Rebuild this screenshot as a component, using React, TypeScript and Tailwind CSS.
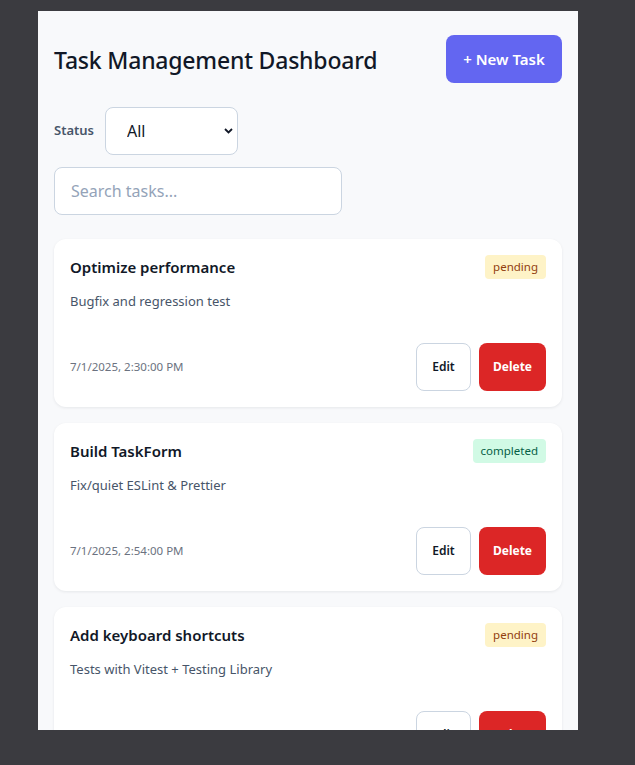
import { useState } from "react";

type Task = {
  id: number;
  title: string;
  description: string;
  status: "pending" | "completed";
  createdAt: string;
};

const tasks: Task[] = [
  {
    id: 1,
    title: "Optimize performance",
    description: "Bugfix and regression test",
    status: "pending",
    createdAt: "7/1/2025, 2:30:00 PM",
  },
  {
    id: 2,
    title: "Build TaskForm",
    description: "Fix/quiet ESLint & Prettier",
    status: "completed",
    createdAt: "7/1/2025, 2:54:00 PM",
  },
  {
    id: 3,
    title: "Add keyboard shortcuts",
    description: "Tests with Vitest + Testing Library",
    status: "pending",
    createdAt: "7/1/2025, 3:12:00 PM",
  },
];

function StatusBadge({ status }: { status: Task["status"] }) {
  const styles =
    status === "completed"
      ? "bg-[#d1fae5] text-[#065f46]"
      : "bg-[#fef3c7] text-[#92400e]";
  return (
    <span className={`${styles} rounded px-[8px] h-6 flex items-center text-[11.5px]`}>
      {status}
    </span>
  );
}

function TaskCard({ task }: { task: Task }) {
  return (
    <div className="bg-white rounded-xl shadow-[0_1px_3px_rgba(15,23,42,0.08)] p-4 shrink-0">
      <div className="flex items-center justify-between h-6">
        <h3 className="text-[15px] font-semibold text-[#111827]">{task.title}</h3>
        <StatusBadge status={task.status} />
      </div>
      <p className="mt-[12px] text-[13px] leading-5 text-[#475569]">{task.description}</p>
      <div className="mt-8 flex items-center justify-between">
        <span className="text-[11.5px] text-[#6b7280]">{task.createdAt}</span>
        <div className="flex gap-2">
          <button className="h-12 w-[55px] rounded-lg border border-[#cbd5e1] bg-white text-xs font-semibold text-[#111827]">
            Edit
          </button>
          <button className="h-12 w-[67px] rounded-lg bg-[#dc2626] text-xs font-bold text-white">
            Delete
          </button>
        </div>
      </div>
    </div>
  );
}

export default function App() {
  const [status, setStatus] = useState("all");
  const [query, setQuery] = useState("");

  return (
    <div
      className="min-h-[765px] bg-[#3b3b40] pt-[11px] pl-[38px]"
      style={{ fontFamily: '"Segoe UI", "Noto Sans", "Open Sans", sans-serif' }}
    >
      <div className="w-[540px] h-[719px] overflow-hidden bg-[#f8f9fb] px-4 pt-6">
        <header className="flex items-center justify-between h-12">
          <h1 className="text-[23px] font-medium text-[#111827] tracking-[-0.2px] pt-[2px]">
            Task Management Dashboard
          </h1>
          <button className="h-12 w-[116px] rounded-lg bg-[#6366f1] text-[15px] font-semibold text-white">
            + New Task
          </button>
        </header>

        <div className="mt-6 flex items-center gap-[11px]">
          <label className="text-[13px] font-semibold text-[#475569]">Status</label>
          <div className="relative">
            <select
              value={status}
              onChange={(e) => setStatus(e.target.value)}
              className="appearance-none h-12 w-[133px] rounded-lg border border-[#cbd5e1] bg-white pl-[21px] text-base text-[#111827]"
            >
              <option value="all">All</option>
              <option value="pending">Pending</option>
              <option value="completed">Completed</option>
            </select>
            <svg
              className="pointer-events-none absolute right-[5px] top-[21px]"
              width="9"
              height="6"
              viewBox="0 0 9 6"
              fill="none"
            >
              <path d="M1 1l3.5 3.5L8 1" stroke="#111827" strokeWidth="1.8" />
            </svg>
          </div>
        </div>

        <input
          value={query}
          onChange={(e) => setQuery(e.target.value)}
          placeholder="Search tasks..."
          className="mt-3 h-12 w-[288px] rounded-lg border border-[#cbd5e1] bg-white px-4 text-base text-[#111827] placeholder:text-[#94a3b8] outline-none"
        />

        <div className="mt-6 flex flex-col gap-4">
          {tasks.map((t) => (
            <TaskCard key={t.id} task={t} />
          ))}
        </div>
      </div>
    </div>
  );
}
